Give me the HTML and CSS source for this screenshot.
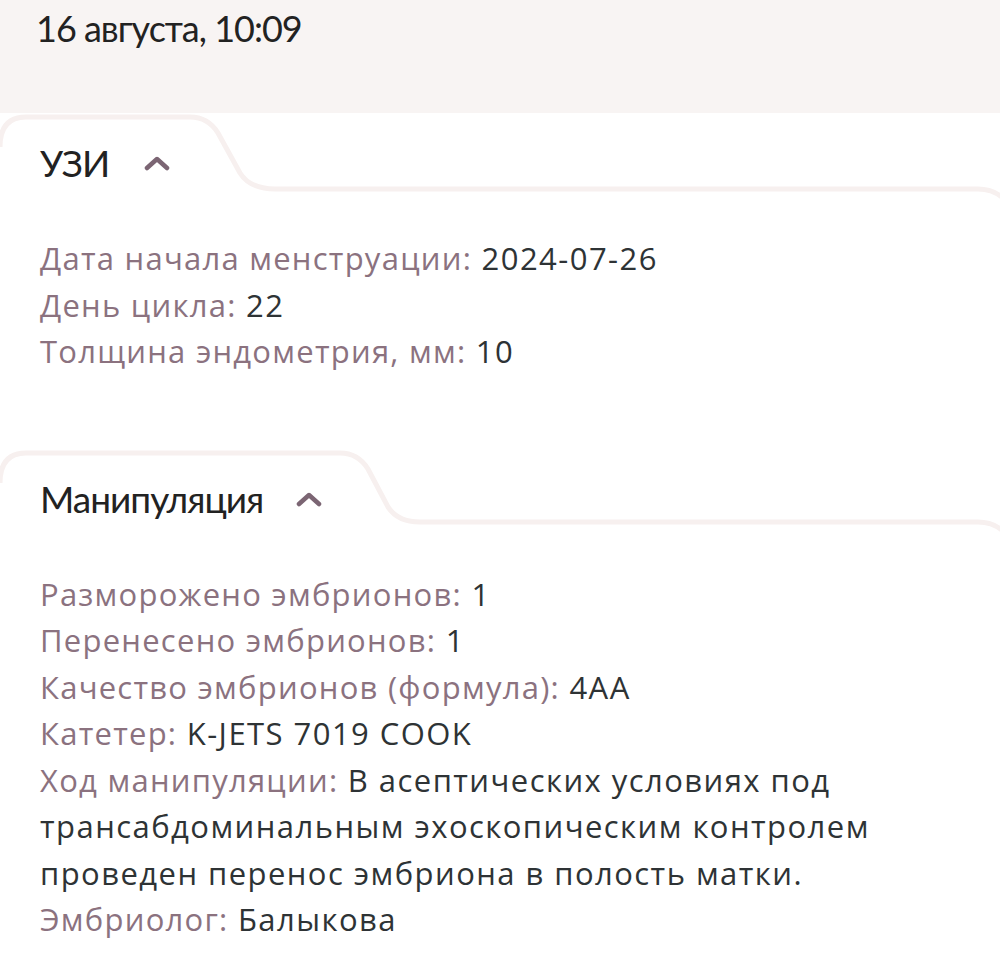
FILE: index.html
```html
<!DOCTYPE html>
<html lang="ru">
<head>
<meta charset="utf-8">
<link rel="stylesheet" href="styles.css">
</head>
<body>
<header class="top">
  <div class="top-date">16 августа, 10:09</div>
</header>

<section class="section">
  <svg class="tab-bg" width="1010" height="90" viewBox="0 0 1010 90" aria-hidden="true">
    <path d="M0 34 Q0 4 26 4 L190 4 Q208 4 218 20 L240 60 Q250 76 275 76 L978 76 Q995 76 1006 88" />
  </svg>
  <div class="section-head">
    <h2 class="section-title">УЗИ</h2>
    <svg class="chevron" width="26" height="16" viewBox="0 0 26 16" aria-hidden="true"><path d="M3 13 L13 4 L23 13"/></svg>
  </div>
  <div class="rows">
    <div class="row"><span class="label">Дата начала менструации:</span> 2024-07-26</div>
    <div class="row"><span class="label">День цикла:</span> 22</div>
    <div class="row"><span class="label">Толщина эндометрия, мм:</span> 10</div>
  </div>
</section>

<section class="section section-2">
  <svg class="tab-bg" width="1010" height="90" viewBox="0 0 1010 90" aria-hidden="true">
    <path d="M0 34 Q0 4 26 4 L340 4 Q358 4 368 20 L388 58 Q398 73 420 73 L978 73 Q995 73 1006 85" />
  </svg>
  <div class="section-head section-head-2">
    <h2 class="section-title">Манипуляция</h2>
    <svg class="chevron" width="26" height="16" viewBox="0 0 26 16" aria-hidden="true"><path d="M3 13 L13 4 L23 13"/></svg>
  </div>
  <div class="rows">
    <div class="row"><span class="label">Разморожено эмбрионов:</span> 1</div>
    <div class="row"><span class="label">Перенесено эмбрионов:</span> 1</div>
    <div class="row"><span class="label">Качество эмбрионов (формула):</span> 4AA</div>
    <div class="row"><span class="label">Катетер:</span> K-JETS 7019 COOK</div>
    <div class="row"><span class="label">Ход манипуляции:</span> В асептических условиях под трансабдоминальным эхоскопическим контролем проведен перенос эмбриона в полость матки.</div>
    <div class="row"><span class="label">Эмбриолог:</span> Балыкова</div>
  </div>
</section>
</body>
</html>
```

FILE: styles.css
```css
html, body {
  margin: 0;
  padding: 0;
  background: #ffffff;
  overflow: hidden;
}
body {
  font-family: "Open Sans", "Noto Sans", sans-serif;
  color: #2e3335;
  width: 1000px;
  height: 977px;
}
.top {
  background: #f8f4f3;
  height: 113px;
  padding: 6px 36px 0;
  box-sizing: border-box;
}
.top-date {
  font-family: "Lato", "Open Sans", sans-serif;
  font-size: 36px;
  line-height: 44px;
  color: #222;
  letter-spacing: -1px;
}
.section {
  position: relative;
  padding: 0 40px;
}
.tab-bg {
  position: absolute;
  left: 0;
  top: 0;
  pointer-events: none;
}
.tab-bg path {
  fill: none;
  stroke: #f7f0ef;
  stroke-width: 5;
}
.section-head {
  position: relative;
  display: flex;
  align-items: center;
  gap: 35px;
  height: 44px;
  padding-top: 28px;
}
.section-head-2 {
  gap: 33px;
}
.section-title {
  margin: 0;
  font-family: "Lato", "Open Sans", sans-serif;
  font-weight: 400;
  font-size: 37px;
  line-height: 44px;
  letter-spacing: -1px;
  color: #222222;
}
.chevron path {
  fill: none;
  stroke: #7b6573;
  stroke-width: 4.5;
  stroke-linecap: round;
  stroke-linejoin: round;
}
.rows {
  margin-top: 50px;
  font-size: 31px;
  line-height: 46.5px;
}
.row {
  color: #2e3335;
  letter-spacing: 1.45px;
}
.label {
  color: #8b727f;
  letter-spacing: 1.25px;
}
.section-2 {
  margin-top: 74px;
}
```
